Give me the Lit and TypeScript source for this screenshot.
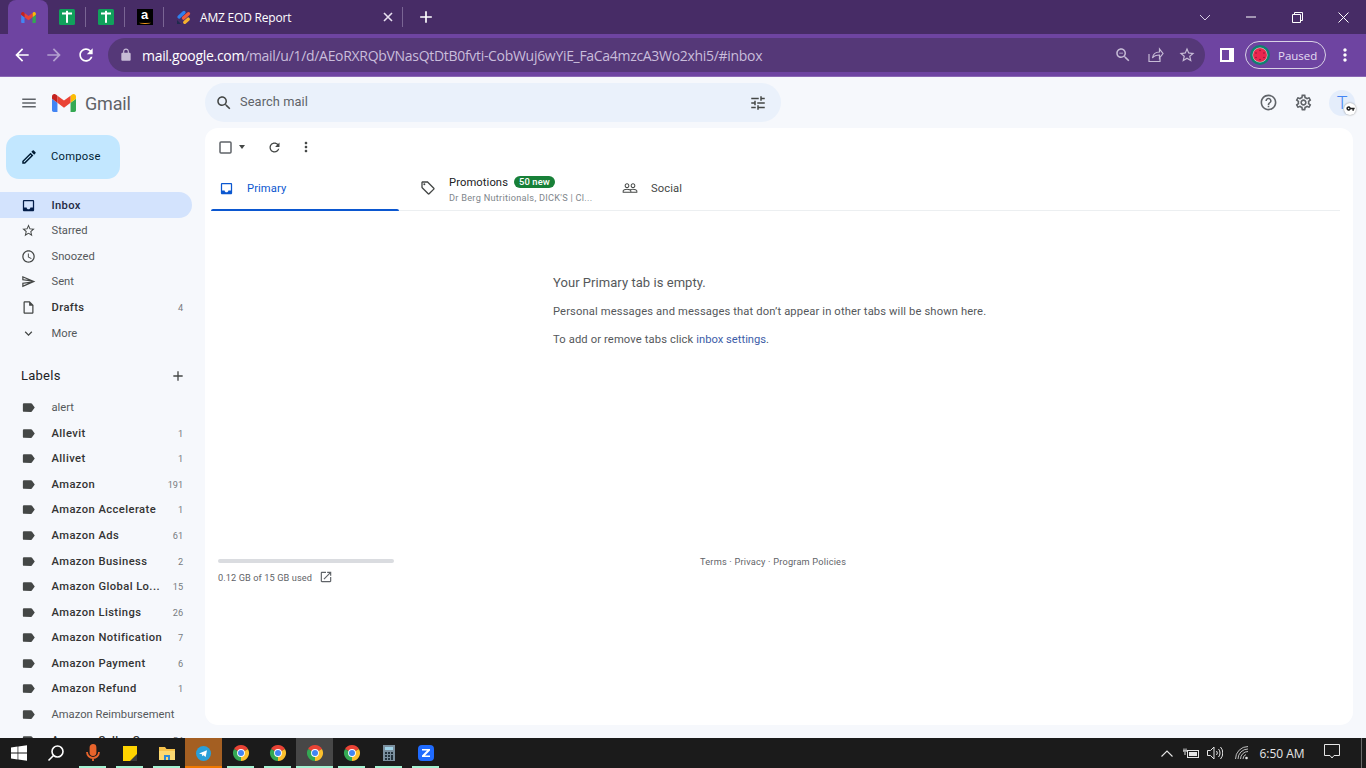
import { LitElement, html, css, nothing } from 'lit';
import { customElement } from 'lit/decorators.js';

// material icon paths, all on a 24 grid
const P = {
  menu: 'M3 18h18v-2H3v2zm0-5h18v-2H3v2zm0-7v2h18V6H3z',
  search: 'M15.5 14h-.79l-.28-.27C15.41 12.59 16 11.11 16 9.5 16 5.91 13.09 3 9.5 3S3 5.91 3 9.5 5.91 16 9.5 16c1.61 0 3.09-.59 4.23-1.57l.27.28v.79l5 4.99L20.49 19l-4.99-5zm-6 0C7.01 14 5 11.99 5 9.5S7.01 5 9.5 5 14 7.01 14 9.5 11.99 14 9.5 14z',
  zoomOut: 'M15.5 14h-.79l-.28-.27C15.41 12.59 16 11.11 16 9.5 16 5.91 13.09 3 9.5 3S3 5.91 3 9.5 5.91 16 9.5 16c1.61 0 3.09-.59 4.23-1.57l.27.28v.79l5 4.99L20.49 19l-4.99-5zm-6 0C7.01 14 5 11.99 5 9.5S7.01 5 9.5 5 14 7.01 14 9.5 11.99 14 9.5 14zM7 9h5v1H7z',
  tune: 'M3 17v2h6v-2H3zM3 5v2h10V5H3zm10 16v-2h8v-2h-8v-2h-2v6h2zM7 9v2H3v2h4v2h2V9H7zm14 4v-2H11v2h10zm-6-4h2V7h4V5h-4V3h-2v6z',
  help: 'M11 18h2v-2h-2v2zm1-16C6.48 2 2 6.48 2 12s4.48 10 10 10 10-4.48 10-10S17.52 2 12 2zm0 18c-4.41 0-8-3.59-8-8s3.59-8 8-8 8 3.59 8 8-3.59 8-8 8zm0-14c-2.21 0-4 1.79-4 4h2c0-1.1.9-2 2-2s2 .9 2 2c0 2-3 1.75-3 5h2c0-2.25 3-2.5 3-5 0-2.21-1.79-4-4-4z',
  gear: 'M19.43 12.98c.04-.32.07-.64.07-.98 0-.34-.03-.66-.07-.98l2.11-1.65c.19-.15.24-.42.12-.64l-2-3.46c-.09-.16-.26-.25-.44-.25-.06 0-.12.01-.17.03l-2.49 1c-.52-.4-1.08-.73-1.69-.98l-.38-2.65C14.46 2.18 14.25 2 14 2h-4c-.25 0-.46.18-.49.42l-.38 2.65c-.61.25-1.17.59-1.69.98l-2.49-1c-.06-.02-.12-.03-.18-.03-.17 0-.34.09-.43.25l-2 3.46c-.13.22-.07.49.12.64l2.11 1.65c-.04.32-.07.65-.07.98 0 .33.03.66.07.98l-2.11 1.65c-.19.15-.24.42-.12.64l2 3.46c.09.16.26.25.44.25.06 0 .12-.01.17-.03l2.49-1c.52.4 1.08.73 1.69.98l.38 2.65c.03.24.24.42.49.42h4c.25 0 .46-.18.49-.42l.38-2.65c.61-.25 1.17-.59 1.69-.98l2.49 1c.06.02.12.03.18.03.17 0 .34-.09.43-.25l2-3.46c.12-.22.07-.49-.12-.64l-2.11-1.65zm-1.98-1.71c.04.31.05.52.05.73 0 .21-.02.43-.05.73l-.14 1.13.89.7 1.08.84-.7 1.21-1.27-.51-1.04-.42-.9.68c-.43.32-.84.56-1.25.73l-1.06.43-.16 1.13-.2 1.35h-1.4l-.19-1.35-.16-1.13-1.06-.43c-.43-.18-.83-.41-1.23-.71l-.91-.7-1.06.43-1.27.51-.7-1.21 1.08-.84.89-.7-.14-1.13c-.03-.31-.05-.54-.05-.74s.02-.43.05-.73l.14-1.13-.89-.7-1.08-.84.7-1.21 1.27.51 1.04.42.9-.68c.43-.32.84-.56 1.25-.73l1.06-.43.16-1.13.2-1.35h1.39l.19 1.35.16 1.13 1.06.43c.43.18.83.41 1.23.71l.91.7 1.06-.43 1.27-.51.7 1.21-1.07.85-.89.7.14 1.13zM12 8c-2.21 0-4 1.79-4 4s1.79 4 4 4 4-1.79 4-4-1.79-4-4-4zm0 6c-1.1 0-2-.9-2-2s.9-2 2-2 2 .9 2 2-.9 2-2 2z',
  inbox: 'M19 3H4.99c-1.11 0-1.98.89-1.98 2L3 19c0 1.1.88 2 1.99 2H19c1.1 0 2-.9 2-2V5c0-1.11-.9-2-2-2zm0 12h-4c0 1.66-1.35 3-3 3s-3-1.34-3-3H4.99V5H19v10z',
  star: 'M22 9.24l-7.19-.62L12 2 9.19 8.63 2 9.24l5.46 4.73L5.82 21 12 17.27 18.18 21l-1.63-7.03L22 9.24zM12 15.4l-3.76 2.27 1-4.28-3.32-2.88 4.38-.38L12 6.1l1.71 4.04 4.38.38-3.32 2.88 1 4.28L12 15.4z',
  clock: 'M11.99 2C6.47 2 2 6.48 2 12s4.47 10 9.99 10C17.52 22 22 17.52 22 12S17.52 2 11.99 2zM12 20c-4.42 0-8-3.58-8-8s3.58-8 8-8 8 3.58 8 8-3.58 8-8 8zm.5-13H11v6l5.25 3.15.75-1.23-4.5-2.67z',
  send: 'M4.01 6.03l7.51 3.22-7.52-1 .01-2.22m7.5 8.72L4 17.97v-2.22l7.51-1M2.01 3L2 10l15 2-15 2 .01 7L23 12 2.01 3z',
  draft: 'M14 2H6c-1.1 0-1.99.9-1.99 2L4 20c0 1.1.89 2 1.99 2H18c1.1 0 2-.9 2-2V8l-6-6zM6 20V4h7v5h5v11H6z',
  more: 'M16.59 8.59L12 13.17 7.41 8.59 6 10l6 6 6-6z',
  label: 'M17.63 5.84C17.27 5.33 16.67 5 16 5L5 5.01C3.9 5.01 3 5.9 3 7v10c0 1.1.9 1.99 2 1.99L16 19c.67 0 1.27-.33 1.63-.84L22 12l-4.37-6.16z',
  add: 'M19 13h-6v6h-2v-6H5v-2h6V5h2v6h6v2z',
  pencil: 'M3 17.25V21h3.75L17.81 9.94l-3.75-3.75L3 17.25zM5.92 19H5v-.92l9.06-9.06.92.92L5.92 19zM20.71 5.63l-2.34-2.34c-.2-.2-.45-.29-.71-.29s-.51.1-.7.29l-1.83 1.83 3.75 3.75 1.83-1.83c.39-.39.39-1.02 0-1.41z',
  refresh: 'M17.65 6.35C16.2 4.9 14.21 4 12 4c-4.42 0-7.99 3.58-7.99 8s3.57 8 7.99 8c3.73 0 6.84-2.55 7.73-6h-2.08c-.82 2.33-3.04 4-5.65 4-3.31 0-6-2.69-6-6s2.69-6 6-6c1.66 0 3.14.69 4.22 1.78L13 11h7V4l-2.35 2.35z',
  kebab: 'M12 8c1.1 0 2-.9 2-2s-.9-2-2-2-2 .9-2 2 .9 2 2 2zm0 2c-1.1 0-2 .9-2 2s.9 2 2 2 2-.9 2-2-.9-2-2-2zm0 6c-1.1 0-2 .9-2 2s.9 2 2 2 2-.9 2-2-.9-2-2-2z',
  tag: 'M21.41 11.58l-9-9C12.05 2.22 11.55 2 11 2H4c-1.1 0-2 .9-2 2v7c0 .55.22 1.05.59 1.42l9 9c.36.36.86.58 1.41.58s1.05-.22 1.41-.59l7-7c.37-.36.59-.86.59-1.41s-.23-1.06-.59-1.42zM13 20.01L4 11V4h7v-.01l9 9-7 7.02zM6.5 5A1.5 1.5 0 1 0 6.5 8 1.5 1.5 0 1 0 6.5 5z',
  people: 'M16.5 13c-1.2 0-3.07.34-4.5 1-1.43-.67-3.3-1-4.5-1C5.33 13 1 14.08 1 16.25V19h22v-2.75c0-2.17-4.33-3.25-6.5-3.25zm-4 4.5h-10v-1.25c0-.54 2.56-1.75 5-1.75s5 1.21 5 1.75v1.25zm9 0H14v-1.25c0-.46-.2-.86-.52-1.22.88-.3 1.96-.53 3.02-.53 2.44 0 5 1.21 5 1.75v1.25zM7.5 12c1.93 0 3.5-1.57 3.5-3.5S9.43 5 7.5 5 4 6.57 4 8.5 5.57 12 7.5 12zm0-5.5c1.1 0 2 .9 2 2s-.9 2-2 2-2-.9-2-2 .9-2 2-2zm9 5.5c1.93 0 3.5-1.57 3.5-3.5S18.43 5 16.5 5 13 6.57 13 8.5s1.57 3.5 3.5 3.5zm0-5.5c1.1 0 2 .9 2 2s-.9 2-2 2-2-.9-2-2 .9-2 2-2z',
  open: 'M19 19H5V5h7V3H5c-1.11 0-2 .9-2 2v14c0 1.1.89 2 2 2h14c1.1 0 2-.9 2-2v-7h-2v7zM14 3v2h3.59l-9.83 9.83 1.41 1.41L19 6.41V10h2V3h-7z',
  key: 'M12.65 10C11.83 7.67 9.61 6 7 6c-3.31 0-6 2.69-6 6s2.69 6 6 6c2.61 0 4.83-1.67 5.65-4H17v4h4v-4h2v-4H12.65zM7 14c-1.1 0-2-.9-2-2s.9-2 2-2 2 .9 2 2-.9 2-2 2z',
  lock: 'M18 8h-1V6c0-2.76-2.24-5-5-5S7 3.24 7 6v2H6c-1.1 0-2 .9-2 2v10c0 1.1.9 2 2 2h12c1.1 0 2-.9 2-2V10c0-1.1-.9-2-2-2zM9 6c0-1.66 1.34-3 3-3s3 1.34 3 3v2H9V6z',
  back: 'M20 11H7.83l5.59-5.59L12 4l-8 8 8 8 1.41-1.41L7.83 13H20v-2z',
  fwd: 'M12 4l-1.41 1.41L16.17 11H4v2h12.17l-5.58 5.59L12 20l8-8z',
};

const icon = (d: string, size: number, cls = '') =>
  html`<svg class="ic ${cls}" width=${size} height=${size} viewBox="0 0 24 24"><path d=${d}></path></svg>`;

const gmailMark = (w: number, h: number) => html`<svg width=${w} height=${h} viewBox="52 42 88 66">
  <path fill="#4285f4" d="M58 108h14V74L52 59v43c0 3.32 2.69 6 6 6"></path>
  <path fill="#34a853" d="M120 108h14c3.32 0 6-2.69 6-6V59l-20 15"></path>
  <path fill="#fbbc04" d="M120 48v26l20-15v-8c0-7.42-8.47-11.65-14.4-7.2"></path>
  <path fill="#ea4335" d="M72 74V48l24 18 24-18v26L96 92"></path>
  <path fill="#c5221f" d="M52 51v8l20 15V48l-5.6-4.2c-5.94-4.45-14.4-.22-14.4 7.2"></path>
</svg>`;

const sheetIcon = () => html`<svg width="16" height="16" viewBox="0 0 16 16">
  <rect width="16" height="16" rx="1.5" fill="#11a05c"></rect>
  <rect x="3" y="3.500" width="10" height="2" fill="#fff"></rect>
  <rect x="7" y="1.800" width="2" height="12" fill="#fff"></rect>
</svg>`;

const chrome = (badge?: 'pink' | 'grey' | 'dark') => html`<svg class="chrome" width="16" height="16" viewBox="0 0 16 16">
  <path fill="#ea4335" d="M8 8L1.07 4A8 8 0 0 1 14.93 4Z"></path>
  <path fill="#fbc02d" d="M8 8L14.93 4A8 8 0 0 1 8 16Z"></path>
  <path fill="#34a853" d="M8 8L8 16A8 8 0 0 1 1.07 4Z"></path>
  <circle cx="8" cy="8" r="3.9" fill="#fff"></circle>
  <circle cx="8" cy="8" r="3" fill="#4285f4"></circle>
  ${badge === 'pink'
    ? html`<circle cx="12.5" cy="12.5" r="3.6" fill="#1a8a78"></circle><circle cx="12.5" cy="12.5" r="2.6" fill="#e8234f"></circle>`
    : badge === 'grey'
      ? html`<circle cx="12.5" cy="12.5" r="3.8" fill="#c9c9c9"></circle><circle cx="12.5" cy="11.3" r="1.4" fill="#666"></circle><rect x="10.5" y="13" width="4" height="2.4" fill="#777"></rect>`
      : badge === 'dark'
        ? html`<circle cx="12.5" cy="12.5" r="3.8" fill="#2c2620"></circle><circle cx="12.5" cy="11.4" r="1.5" fill="#d9a873"></circle><rect x="10.5" y="13.2" width="4" height="2.2" fill="#7a5a34"></rect>`
        : nothing}
</svg>`;

const NAV: [string, string, string?, boolean?][] = [
  ['Starred', P.star],
  ['Snoozed', P.clock],
  ['Sent', P.send],
  ['Drafts', P.draft, '4', true],
  ['More', P.more],
];

const LABELS: [string, string?, boolean?][] = [
  ['alert'],
  ['Allevit', '1', true],
  ['Allivet', '1', true],
  ['Amazon', '191', true],
  ['Amazon Accelerate', '1', true],
  ['Amazon Ads', '61', true],
  ['Amazon Business', '2', true],
  ['Amazon Global Lo...', '15', true],
  ['Amazon Listings', '26', true],
  ['Amazon Notification', '7', true],
  ['Amazon Payment', '6', true],
  ['Amazon Refund', '1', true],
  ['Amazon Reimbursement'],
  ['Amazon Seller C...', '54', true],
];

@customElement('app-root')
export class AppRoot extends LitElement {
  static styles = css`
    :host {
      display: flex;
      flex-direction: column;
      width: 1366px;
      height: 768px;
      overflow: hidden;
      font-family: Roboto, 'Liberation Sans', sans-serif;
      color: #202124;
    }
    .ic { display: block; fill: currentColor; flex: none; }

    /* browser tab strip */
    .tabstrip {
      height: 34px;
      flex: none;
      display: flex;
      align-items: center;
      background: #472c66;
      padding-left: 8px;
      color: #fff;
    }
    .tab-active {
      width: 40px;
      height: 34px;
      align-self: flex-end;
      background: #6e44a1;
      border-radius: 8px 8px 0 0;
      display: flex;
      align-items: center;
      justify-content: center;
      flex: none;
    }
    .tab-pin {
      width: 39px;
      height: 20px;
      display: flex;
      align-items: center;
      justify-content: center;
      border-right: 1px solid #7a6594;
      box-sizing: border-box;
      flex: none;
      padding-left: 1px;
    }
    .tab-pin.first { width: 38px; }
    .amz-logo {
      width: 16px;
      height: 16px;
      background: #000;
      color: #fff;
      font: bold 13px/12px 'Liberation Sans', sans-serif;
      text-align: center;
      position: relative;
    }
    .amz-logo::after {
      content: '';
      position: absolute;
      left: 2px;
      right: 2px;
      bottom: 1px;
      height: 2px;
      border-bottom: 1.5px solid #f59a1c;
      border-radius: 0 0 50% 50%;
    }
    .tab-open {
      width: 239px;
      height: 20px;
      display: flex;
      align-items: center;
      box-sizing: border-box;
      padding: 0 9px 0 12px;
      border-right: 1px solid #7a6594;
      flex: none;
      font: 12px 'Open Sans', 'Liberation Sans', sans-serif;
      letter-spacing: -0.2px;
    }
    .tab-open .title { margin-left: 8px; flex: 1; white-space: nowrap; }
    .new-tab { margin-left: 13px; }
    .win-ctl { margin-left: auto; display: flex; align-items: center; }
    .win-btn {
      width: 46px;
      height: 30px;
      display: flex;
      align-items: center;
      justify-content: center;
    }

    /* browser toolbar */
    .toolbar {
      height: 43px;
      flex: none;
      box-sizing: border-box;
      display: flex;
      align-items: center;
      background: #6e44a1;
      border-bottom: 1px solid #8a68b4;
      color: #fff;
      padding-left: 12px;
    }
    .nav-btn { width: 32px; display: flex; justify-content: flex-start; flex: none; }
    .nav-btn.dim { color: #b3a0cf; }
    .omnibox {
      width: 1097px;
      height: 34px;
      border-radius: 17px;
      background: #553878;
      display: flex;
      align-items: center;
      padding-left: 11px;
      box-sizing: border-box;
      flex: none;
      color: #c6bbd6;
    }
    .url {
      margin-left: 9px;
      flex: 1;
      font: 14px 'Open Sans', 'Liberation Sans', sans-serif;
      letter-spacing: -0.305px;
      white-space: nowrap;
      color: #c9bddb;
    }
    .url b { font-weight: 400; color: #fff; }
    .omni-icons { display: flex; gap: 14px; padding-right: 9px; }
    .side-panel {
      margin-left: 15px;
      width: 14px;
      height: 14px;
      box-sizing: border-box;
      border: 2px solid #fff;
      border-right-width: 5px;
      position: relative;
      flex: none;
    }
    .profile {
      margin-left: 11px;
      width: 81px;
      height: 28px;
      box-sizing: border-box;
      border: 1px solid #d9d2e6;
      border-radius: 14px;
      display: flex;
      align-items: center;
      padding-left: 3px;
      flex: none;
    }
    .profile span {
      margin-left: 7px;
      font: 11.5px 'Open Sans', 'Liberation Sans', sans-serif;
      color: #e5dcf2;
    }
    .kebab { margin-left: 9px; color: #fff; }

    /* gmail */
    .app { flex: 1; min-height: 0; display: flex; background: #f6f8fc; overflow: hidden; }
    .sidebar { width: 205px; flex: none; overflow: hidden; }
    .brand { height: 52px; display: flex; align-items: center; padding: 0 0 0 20px; }
    .brand .burger { color: #5f6368; margin-right: 14px; }
    .brand .word { margin-left: 9px; font-size: 18px; color: #5f6368; letter-spacing: -0.2px; }
    .compose {
      margin: 6px 0 13.4px 6px;
      width: 114px;
      height: 44px;
      border-radius: 13px;
      background: #c2e7ff;
      display: flex;
      align-items: center;
      padding-left: 14px;
      box-sizing: border-box;
      font-size: 11.2px;
      letter-spacing: 0.25px;
      color: #001d35;
    }
    .compose .ic { margin-right: 13px; }
    .compose span { margin-top: -2px; }
    .row {
      height: 25.6px;
      width: 192px;
      box-sizing: border-box;
      display: flex;
      align-items: center;
      padding: 0 9px 0 21px;
      font-size: 11.2px;
      color: #55585b;
      border-radius: 0 13px 13px 0;
    }
    .row.active { background: #d3e3fd; color: #1f2a44; font-weight: 500; letter-spacing: 0.35px; }
    .row.bold { font-weight: 500; color: #333; letter-spacing: 0.42px; }
    .row .ic { margin-right: 15.500px; color: #444746; }
    .row.active .ic { color: #041e49; }
    .row .name { flex: 1; white-space: nowrap; }
    .row .count { font-size: 9.2px; font-weight: 400; color: #777b7f; letter-spacing: -0.1px; }
    .labels-head {
      height: 40px;
      margin: 10px 0 -1.3px;
      width: 192px;
      box-sizing: border-box;
      display: flex;
      align-items: center;
      justify-content: space-between;
      padding: 0 6px 0 21px;
      font-size: 13px;
      letter-spacing: 0.25px;
      color: #202124;
    }
    .labels-head .ic { color: #444746; }

    .main { flex: 1; min-width: 0; display: flex; flex-direction: column; padding: 0 13px 13px 0; }
    .topbar { height: 51px; flex: none; display: flex; align-items: flex-start; }
    .searchbox {
      margin-top: 6px;
      width: 576px;
      height: 39px;
      border-radius: 20px;
      background: #eaf1fb;
      display: flex;
      align-items: center;
      padding: 0 14px 0 10px;
      box-sizing: border-box;
      color: #444746;
      font-size: 12.8px;
      flex: none;
    }
    .searchbox .placeholder { margin: -2px 0 0 7px; flex: 1; color: #5f6368; letter-spacing: 0.1px; }
    .top-right { margin-left: auto; display: flex; align-items: center; height: 51px; color: #5f6368; }
    .top-right .gear { margin-left: 16px; }
    .avatar {
      margin-left: 16px;
      margin-right: -2px;
      width: 26px;
      height: 26px;
      border-radius: 50%;
      background: #e4edfb;
      color: #4285f4;
      font-size: 18px;
      font-weight: 300;
      display: flex;
      align-items: center;
      justify-content: center;
      position: relative;
    }
    .key-badge {
      position: absolute;
      right: -1px;
      bottom: 1px;
      width: 12px;
      height: 12px;
      border-radius: 50%;
      background: #fff;
      color: #222;
      display: flex;
      align-items: center;
      justify-content: center;
      box-shadow: 0 0 2px #888;
    }
    .card {
      flex: 1;
      min-height: 0;
      background: #fff;
      border-radius: 13px;
      display: flex;
      flex-direction: column;
      padding: 0 13px 0 6px;
    }
    .mail-tools { height: 38px; flex: none; display: flex; align-items: center; color: #444746; padding-left: 8px; }
    .mail-tools .caret {
      width: 0;
      height: 0;
      margin-left: 7px;
      border: 3.5px solid transparent;
      border-top: 4px solid #444746;
      border-bottom: 0;
    }
    .mail-tools .reload { margin-left: 22px; }
    .mail-tools .dots { margin-left: 16px; }
    .mail-tabs { height: 44px; flex: none; display: flex; border-bottom: 1px solid #eceff1; }
    .mail-tab {
      position: relative;
      display: flex;
      align-items: center;
      box-sizing: border-box;
      font-size: 11.2px;
      letter-spacing: 0.1px;
      color: #444746;
      flex: none;
    }
    .mail-tab.primary { width: 188px; padding-left: 8px; color: #0b57d0; }
    .mail-tab.primary::after {
      content: '';
      position: absolute;
      left: 0;
      right: 0;
      bottom: -1px;
      height: 2px;
      background: #0b57d0;
      border-radius: 2px 2px 0 0;
    }
    .mail-tab.promo { width: 202px; padding-left: 21px; }
    .mail-tab.social { padding-left: 21px; }
    .mail-tab .ic { margin-right: 13px; }
    .promo-copy { padding-top: 2px; }
    .promo-title { display: flex; align-items: center; color: #202124; }
    .pill {
      margin-left: 6px;
      background: #188038;
      color: #fff;
      font-size: 9.4px;
      font-weight: 500;
      line-height: 12px;
      padding: 0 5px;
      border-radius: 6px;
    }
    .promo-sub { font-size: 9.2px; color: #80868b; margin-top: 3px; white-space: nowrap; letter-spacing: 0.27px; }
    .empty { padding: 64px 0 0 342px; flex: none; height: 348px; box-sizing: border-box; color: #55585b; font-size: 11.2px; }
    .empty h2 { margin: 0 0 14px; font-size: 13px; line-height: 16px; font-weight: 400; color: #55585b; letter-spacing: 0.05px; }
    .empty p { margin: 0 0 15px; line-height: 13px; letter-spacing: 0.13px; }
    .empty a { color: #3c5da8; letter-spacing: 0; }
    .foot { display: flex; padding-left: 7px; font-size: 9.2px; color: #5f6368; }
    .storage { width: 176px; flex: none; }
    .bar { height: 4px; border-radius: 2px; background: #dadce0; }
    .used { margin-top: 7px; display: flex; align-items: center; gap: 7px; white-space: nowrap; letter-spacing: 0.1px; }
    .terms { margin-left: 306px; margin-top: -3px; white-space: nowrap; letter-spacing: 0.21px; }

    /* windows taskbar */
    .taskbar { height: 30px; flex: none; display: flex; background: #1b1b1b; color: #fff; }
    .cell {
      width: 37px;
      height: 30px;
      position: relative;
      display: flex;
      align-items: center;
      justify-content: center;
      flex: none;
    }
    .chrome { overflow: visible; }
    .cell.run::after {
      content: '';
      position: absolute;
      left: 5px;
      right: 5px;
      bottom: 0;
      height: 2px;
      background: #a4f2d2;
    }
    .cell.tg { background: #a45f22; }
    .cell.tg::after { content: ''; position: absolute; left: 0; right: 0; bottom: 0; height: 2px; background: #f07800; }
    .cell.cur { background: #474747; }
    .cell.cur.run::after { left: 0; right: 0; }
    .tray { margin-left: auto; display: flex; align-items: center; height: 30px; color: #e6e6e6; }
    .tray-i { width: 24px; display: flex; justify-content: center; flex: none; }
    .tray-i.wifi { margin-left: 3px; }
    .clock { width: 56px; text-align: center; font: 12px 'Open Sans', 'Liberation Sans', sans-serif; }
    .notif { margin-left: 14px; margin-right: 21px; }
    .peek { width: 1px; height: 30px; background: #6a6a6a; margin-right: 4px; }
  `;

  private tabs() {
    return html`<div class="tabstrip">
      <div class="tab-active">${gmailMark(15, 11)}</div>
      <div class="tab-pin first">${sheetIcon()}</div>
      <div class="tab-pin">${sheetIcon()}</div>
      <div class="tab-pin"><div class="amz-logo">a</div></div>
      <div class="tab-open">
        <svg width="16" height="16" viewBox="0 0 16 16">
          <rect x="0.5" y="4" width="10" height="3.4" rx="1.7" transform="rotate(-42 5.5 5.7)" fill="#2f80ed"></rect>
          <rect x="5" y="5.2" width="10" height="3.4" rx="1.7" transform="rotate(-42 10 6.9)" fill="#ef5b3a"></rect>
          <rect x="6.5" y="10" width="8" height="3.4" rx="1.7" transform="rotate(-42 10.5 11.7)" fill="#f7b12e"></rect>
          <path d="M1 15v-4l4 4z" fill="#1f2a4d"></path>
        </svg>
        <span class="title">AMZ EOD Report</span>
        <svg width="10" height="10" viewBox="0 0 10 10"><path d="M1 1l8 8M9 1L1 9" stroke="#e8e0f0" stroke-width="1.6" fill="none"></path></svg>
      </div>
      <div class="new-tab">${icon(P.add, 20)}</div>
      <div class="win-ctl">
        <div class="win-btn"><svg width="12" height="7" viewBox="0 0 12 7"><path d="M1 1l5 5 5-5" stroke="#d8cfe4" fill="none"></path></svg></div>
        <div class="win-btn"><svg width="10" height="2" viewBox="0 0 10 2"><path d="M0 1h10" stroke="#fff"></path></svg></div>
        <div class="win-btn"><svg width="11" height="11" viewBox="0 0 11 11"><path d="M.5 2.5h8v8h-8zM2.5 2.5v-2h8v8h-2" stroke="#fff" fill="none"></path></svg></div>
        <div class="win-btn"><svg width="11" height="11" viewBox="0 0 11 11"><path d="M.5.5l10 10M10.5.5l-10 10" stroke="#fff" fill="none"></path></svg></div>
      </div>
    </div>`;
  }

  private toolbar() {
    return html`<div class="toolbar">
      <div class="nav-btn">${icon(P.back, 20)}</div>
      <div class="nav-btn dim">${icon(P.fwd, 20)}</div>
      <div class="nav-btn">${icon(P.refresh, 20)}</div>
      <div class="omnibox">
        ${icon(P.lock, 14)}
        <div class="url"><b>mail.google.com</b>/mail/u/1/d/AEoRXRQbVNasQtDtB0fvti-CobWuj6wYiE_FaCa4mzcA3Wo2xhi5/#inbox</div>
        <div class="omni-icons">
          ${icon(P.zoomOut, 18)}
          <svg width="18" height="18" viewBox="0 0 18 18"><path d="M3 8v7.500h11V12M6.500 12c.5-4 3.500-6 7-6V3l3.500 4.500L13.500 12V9c-3 0-5.500 .8-7 3z" stroke="currentColor" stroke-width="1.200" fill="none"></path></svg>
          ${icon(P.star, 18)}
        </div>
      </div>
      <div class="side-panel"></div>
      <div class="profile">
        <svg width="22" height="22" viewBox="0 0 22 22">
          <circle cx="11" cy="11" r="10" fill="#10806f"></circle>
          <circle cx="11" cy="11" r="7.500" fill="#cfe9dc"></circle>
          <circle cx="11" cy="11" r="7" fill="#e8274f"></circle>
          <g fill="#7a1230"><circle cx="11" cy="6.500" r=".7"></circle><circle cx="15" cy="9" r=".7"></circle><circle cx="15" cy="13.500" r=".7"></circle><circle cx="11" cy="15.500" r=".7"></circle><circle cx="7" cy="13.500" r=".7"></circle><circle cx="7" cy="9" r=".7"></circle></g>
        </svg>
        <span>Paused</span>
      </div>
      <div class="kebab">${icon(P.kebab, 20)}</div>
    </div>`;
  }

  private sidebar() {
    return html`<div class="sidebar">
      <div class="brand">
        <div class="burger">${icon(P.menu, 18)}</div>
        ${gmailMark(24, 18)}
        <span class="word">Gmail</span>
      </div>
      <div class="compose">${icon(P.pencil, 18)}<span>Compose</span></div>
      <div class="row active">${icon(P.inbox, 15)}<span class="name">Inbox</span></div>
      ${NAV.map(
        ([name, d, count, bold]) => html`<div class="row ${bold ? 'bold' : ''}">
          ${icon(d, 15)}<span class="name">${name}</span>${count ? html`<span class="count">${count}</span>` : nothing}
        </div>`
      )}
      <div class="labels-head"><span>Labels</span>${icon(P.add, 16)}</div>
      ${LABELS.map(
        ([name, count, bold]) => html`<div class="row ${bold ? 'bold' : ''}">
          ${icon(P.label, 15)}<span class="name">${name}</span>${count ? html`<span class="count">${count}</span>` : nothing}
        </div>`
      )}
    </div>`;
  }

  private content() {
    return html`<div class="main">
      <div class="topbar">
        <div class="searchbox">
          ${icon(P.search, 18)}
          <span class="placeholder">Search mail</span>
          ${icon(P.tune, 18)}
        </div>
        <div class="top-right">
          ${icon(P.help, 19)}
          <div class="gear">${icon(P.gear, 19)}</div>
          <div class="avatar">T<span class="key-badge">${icon(P.key, 9)}</span></div>
        </div>
      </div>
      <div class="card">
        <div class="mail-tools">
          <svg width="13" height="13" viewBox="0 0 13 13"><rect x="1" y="1" width="11" height="11" rx="1" stroke="#5f6368" stroke-width="1.500" fill="none"></rect></svg>
          <span class="caret"></span>
          <span class="reload">${icon(P.refresh, 15)}</span>
          <span class="dots">${icon(P.kebab, 16)}</span>
        </div>
        <div class="mail-tabs">
          <div class="mail-tab primary">${icon(P.inbox, 15)}<span>Primary</span></div>
          <div class="mail-tab promo">
            ${icon(P.tag, 16)}
            <div class="promo-copy">
              <div class="promo-title">Promotions<span class="pill">50 new</span></div>
              <div class="promo-sub">Dr Berg Nutritionals, DICK'S | Cl...</div>
            </div>
          </div>
          <div class="mail-tab social">${icon(P.people, 16)}<span>Social</span></div>
        </div>
        <div class="empty">
          <h2>Your Primary tab is empty.</h2>
          <p>Personal messages and messages that don’t appear in other tabs will be shown here.</p>
          <p>To add or remove tabs click <a>inbox settings</a>.</p>
        </div>
        <div class="foot">
          <div class="storage">
            <div class="bar"></div>
            <div class="used"><span>0.12 GB of 15 GB used</span>${icon(P.open, 14)}</div>
          </div>
          <div class="terms">Terms · Privacy · Program Policies</div>
        </div>
      </div>
    </div>`;
  }

  private taskbar() {
    return html`<div class="taskbar">
      <div class="cell">
        <svg width="16" height="16" viewBox="0 0 16 16" fill="#fff"><path d="M0 2.400l6.600-.9v6.100H0zM7.300 1.400L16 .2v7.400H7.300zM0 8.400h6.600v6.100L0 13.600zM7.300 8.400H16v7.400l-8.700-1.200z"></path></svg>
      </div>
      <div class="cell">
        <svg width="18" height="18" viewBox="0 0 18 18" fill="none" stroke="#fff" stroke-width="1.600"><circle cx="10.500" cy="7.500" r="5.500"></circle><path d="M6.500 11.500L1.500 16.500"></path></svg>
      </div>
      <div class="cell run">
        <svg width="14" height="18" viewBox="0 0 14 18" fill="none" stroke="#e8642c" stroke-width="1.800"><rect x="4.500" y="1" width="5" height="10" rx="2.500" fill="#e8642c"></rect><path d="M1 8a6 6 0 0 0 12 0M7 14v3"></path></svg>
      </div>
      <div class="cell run">
        <svg width="14" height="15" viewBox="0 0 14 15"><rect width="14" height="15" fill="#ffd400"></rect><path d="M7 15l7-7v7z" fill="#3a3a3a"></path></svg>
      </div>
      <div class="cell run">
        <svg width="16" height="14" viewBox="0 0 16 14"><path d="M0 1h6l1.500 2H16v11H0z" fill="#f6c24c"></path><rect y="5" width="16" height="9" fill="#fbd871"></rect><path d="M5 14V9h6v5h-2v-3H7v3z" fill="#2d89d6"></path></svg>
      </div>
      <div class="cell tg">
        <svg width="15" height="15" viewBox="0 0 15 15"><circle cx="7.500" cy="7.500" r="7.500" fill="#2a9fd8"></circle><path d="M3 7.500l8-3.200-1.300 6.600-2.300-1.700-1.200 1.100-.2-2z" fill="#fff"></path></svg>
      </div>
      <div class="cell run">${chrome('grey')}</div>
      <div class="cell run">${chrome('dark')}</div>
      <div class="cell run cur">${chrome('pink')}</div>
      <div class="cell run">${chrome('pink')}</div>
      <div class="cell run">
        <svg width="12" height="16" viewBox="0 0 12 16"><rect width="12" height="16" fill="#7b8f9e"></rect><rect x="2" y="2" width="8" height="3" fill="#9fd3e8"></rect><path d="M2 7h2v2H2zM5 7h2v2H5zM8 7h2v2H8zM2 10h2v2H2zM5 10h2v2H5zM8 10h2v5H8zM2 13h2v2H2zM5 13h2v2H5z" fill="#23323c"></path></svg>
      </div>
      <div class="cell run">
        <svg width="16" height="16" viewBox="0 0 16 16"><rect width="16" height="16" rx="4" fill="#1f6bff"></rect><path d="M4 4h8v1.600L7 10.500h5V12H4v-1.600L9 5.500H4z" fill="#fff"></path></svg>
      </div>
      <div class="tray">
        <div class="tray-i"><svg width="12" height="7" viewBox="0 0 12 7"><path d="M.5 6.500L6 1l5.500 5.500" stroke="#e6e6e6" stroke-width="1.100" fill="none"></path></svg></div>
        <div class="tray-i"><svg width="16" height="10" viewBox="0 0 16 10"><rect x="4.500" y="2.500" width="11" height="7" stroke="#e6e6e6" fill="none"></rect><rect x="6" y="4" width="8" height="4" fill="#e6e6e6"></rect><path d="M0 3h4M1 .5v3M3 .5v3M2 4v3" stroke="#e6e6e6" fill="none"></path></svg></div>
        <div class="tray-i"><svg width="16" height="14" viewBox="0 0 16 14" fill="none" stroke="#e6e6e6"><path d="M.5 4.500h3L7 1v12L3.500 9.500h-3zM9.500 5a3 3 0 0 1 0 4M11.500 3a6 6 0 0 1 0 8M13.500 1a9 9 0 0 1 0 12"></path></svg></div>
        <div class="tray-i wifi"><svg width="14" height="14" viewBox="0 0 14 14" fill="none" stroke="#bdbdbd"><path d="M.5 13a12.500 12.500 0 0 1 12.500-12.500M3 13a10 10 0 0 1 10-10M5.500 13a7.500 7.500 0 0 1 7.500-7.500M8 13a5 5 0 0 1 3-4.500"></path><circle cx="11.500" cy="12" r="1.300" fill="#e6e6e6" stroke="none"></circle></svg></div>
        <div class="clock">6:50 AM</div>
        <div class="notif"><svg width="16" height="16" viewBox="0 0 16 16" fill="none" stroke="#e6e6e6"><path d="M.5 1.500h15v11H10L8 15l-2-2.500H.5z"></path></svg></div>
        <div class="peek"></div>
      </div>
    </div>`;
  }

  render() {
    return html`
      ${this.tabs()}
      ${this.toolbar()}
      <div class="app">${this.sidebar()}${this.content()}</div>
      ${this.taskbar()}
    `;
  }
}
